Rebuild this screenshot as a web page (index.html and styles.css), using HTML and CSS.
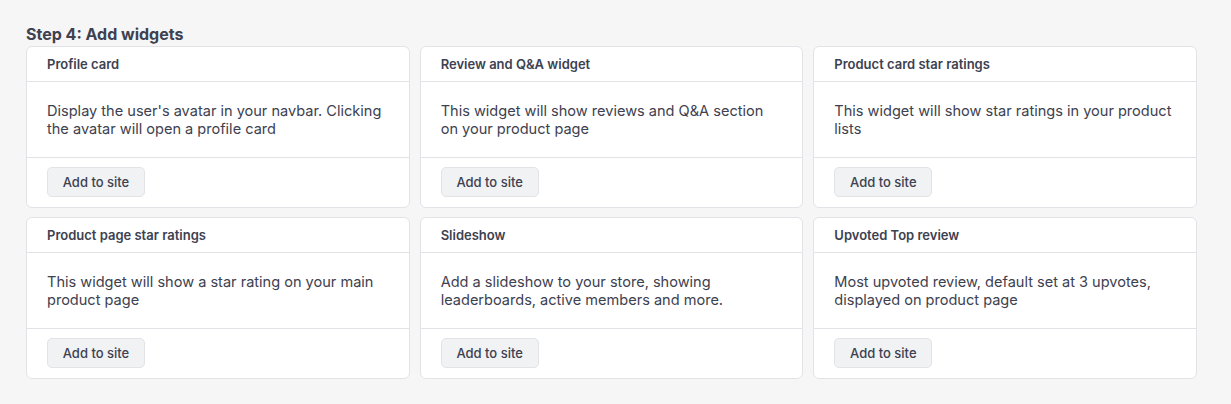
FILE: index.html
```html
<!DOCTYPE html>
<html lang="en">
<head>
<meta charset="utf-8">
<title>Add widgets</title>
<link rel="stylesheet" href="styles.css">
</head>
<body>
<main class="page">
  <h2 class="step-title">Step 4: Add widgets</h2>
  <div class="grid">
    <section class="card">
      <header class="card-head">Profile card</header>
      <div class="card-body">Display the user's avatar in your navbar. Clicking the avatar will open a profile card</div>
      <footer class="card-foot"><button class="btn">Add to site</button></footer>
    </section>
    <section class="card">
      <header class="card-head">Review and Q&amp;A widget</header>
      <div class="card-body">This widget will show reviews and Q&amp;A section on your product page</div>
      <footer class="card-foot"><button class="btn">Add to site</button></footer>
    </section>
    <section class="card">
      <header class="card-head">Product card star ratings</header>
      <div class="card-body">This widget will show star ratings in your product lists</div>
      <footer class="card-foot"><button class="btn">Add to site</button></footer>
    </section>
    <section class="card">
      <header class="card-head">Product page star ratings</header>
      <div class="card-body">This widget will show a star rating on your main product page</div>
      <footer class="card-foot"><button class="btn">Add to site</button></footer>
    </section>
    <section class="card">
      <header class="card-head">Slideshow</header>
      <div class="card-body">Add a slideshow to your store, showing leaderboards, active members and more.</div>
      <footer class="card-foot"><button class="btn">Add to site</button></footer>
    </section>
    <section class="card">
      <header class="card-head">Upvoted Top review</header>
      <div class="card-body">Most upvoted review, default set at 3 upvotes, displayed on product page</div>
      <footer class="card-foot"><button class="btn">Add to site</button></footer>
    </section>
  </div>
</main>
</body>
</html>
```

FILE: styles.css
```css
html, body {
  margin: 0;
  padding: 0;
  background: #f6f6f7;
}
body {
  font-family: Inter, "Noto Sans", "Liberation Sans", sans-serif;
  color: #3d4150;
}
.page {
  padding: 24px 34px 0 26px;
}
.step-title {
  margin: 0;
  font-size: 16px;
  line-height: 20px;
  font-weight: 700;
  color: #3d4150;
  height: 22px;
}
.grid {
  display: grid;
  grid-template-columns: repeat(3, 1fr);
  column-gap: 10px;
  row-gap: 9px;
}
.card {
  background: #ffffff;
  border: 1px solid #e1e3e7;
  border-radius: 6px;
  display: flex;
  flex-direction: column;
}
.card-head {
  padding: 9px 20px 9px 20px;
  font-size: 13px;
  line-height: 16px;
  font-weight: 600;
  border-bottom: 1px solid #e1e3e7;
}
.card-body {
  padding: 20px 20px 19px 20px;
  font-size: 14.55px;
  line-height: 18px;
  border-bottom: 1px solid #e1e3e7;
  min-height: 36px;
}
.card-foot {
  padding: 9px 20px 10px 20px;
}
.btn {
  font-family: inherit;
  font-size: 13px;
  font-weight: 500;
  color: #3d4150;
  background: #f1f2f4;
  border: 1px solid #e1e3e7;
  border-radius: 5px;
  height: 30px;
  width: 98px;
  padding: 0;
  display: block;
}
```
